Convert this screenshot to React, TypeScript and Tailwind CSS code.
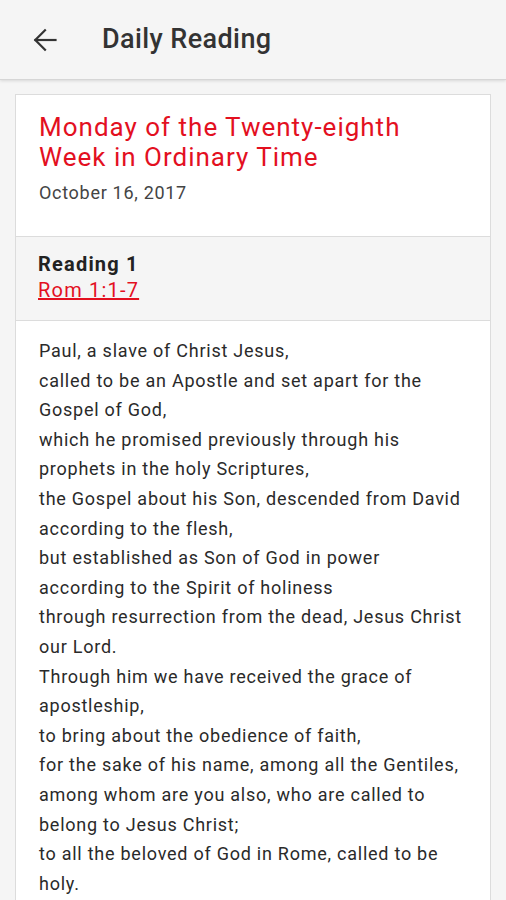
import React from 'react';

const LINES = [
  'Paul, a slave of Christ Jesus,',
  'called to be an Apostle and set apart for the',
  'Gospel of God,',
  'which he promised previously through his',
  'prophets in the holy Scriptures,',
  'the Gospel about his Son, descended from David',
  'according to the flesh,',
  'but established as Son of God in power',
  'according to the Spirit of holiness',
  'through resurrection from the dead, Jesus Christ',
  'our Lord.',
  'Through him we have received the grace of',
  'apostleship,',
  'to bring about the obedience of faith,',
  'for the sake of his name, among all the Gentiles,',
  'among whom are you also, who are called to',
  'belong to Jesus Christ;',
  'to all the beloved of God in Rome, called to be',
  'holy.',
];

export default function App() {
  return (
    <div className="w-[506px] h-[900px] overflow-hidden bg-[#f5f5f5] font-['Roboto',sans-serif]">
      {/* Toolbar */}
      <div className="h-[80px] flex items-center border-b border-[#d6d6d6] shadow-[0_1px_3px_rgba(0,0,0,0.12)] bg-[#f5f5f5]">
        <div className="w-[102px] flex items-center pl-[33px]">
          <svg width="24" height="24" viewBox="0 0 24 24" fill="none" stroke="#333" strokeWidth="2.2" strokeLinecap="square">
            <path d="M22.5 12H2.5" />
            <path d="M12 2.3 2.3 12 12 21.7" />
          </svg>
        </div>
        <div className="text-[27px] text-[#333] font-medium tracking-[0.4px]">Daily Reading</div>
      </div>

      {/* Card */}
      <div className="mx-[15px] mt-[14px] bg-white border border-[#dcdcdc]">
        <div className="px-[23px] pt-[17px] pb-[30px]">
          <div className="text-[26px] leading-[30px] text-[#e3101f] tracking-[1px] whitespace-nowrap">
            Monday of the Twenty-eighth<br />Week in Ordinary Time
          </div>
          <div className="mt-[7px] text-[18px] text-[#444] tracking-[0.7px]">October 16, 2017</div>
        </div>
        <div className="bg-[#f5f5f5] border-y border-[#dcdcdc] px-[22px] pt-[15px] pb-[17px]">
          <div className="text-[20px] font-bold text-[#222] leading-[25px] tracking-[1.2px]">Reading 1</div>
          <div className="text-[20px] text-[#e3101f] underline leading-[26px] tracking-[1.2px]">Rom 1:1-7</div>
        </div>
        <div className="px-[23px] pt-[15px] pb-6 text-[18px] leading-[29.6px] text-[#2a2a2a] tracking-[0.75px] whitespace-nowrap">
          {LINES.map((l, i) => (
            <div key={i}>{l}</div>
          ))}
        </div>
      </div>
    </div>
  );
}
